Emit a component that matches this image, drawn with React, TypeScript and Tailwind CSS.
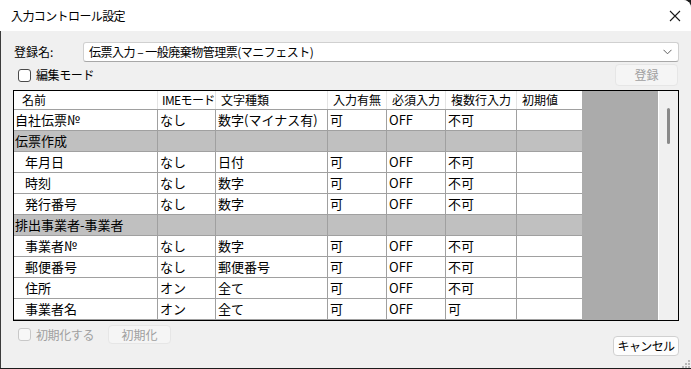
import React from "react";

type Row =
  | { group: string }
  | {
      name: string;
      sub?: boolean;
      ime: string;
      type: string;
      inp: string;
      req: string;
      multi: string;
      init: string;
    };

const rows: Row[] = [
  { name: "自社伝票№", ime: "なし", type: "数字(マイナス有)", inp: "可", req: "OFF", multi: "不可", init: "" },
  { group: "伝票作成" },
  { name: "年月日", sub: true, ime: "なし", type: "日付", inp: "可", req: "OFF", multi: "不可", init: "" },
  { name: "時刻", sub: true, ime: "なし", type: "数字", inp: "可", req: "OFF", multi: "不可", init: "" },
  { name: "発行番号", sub: true, ime: "なし", type: "数字", inp: "可", req: "OFF", multi: "不可", init: "" },
  { group: "排出事業者-事業者" },
  { name: "事業者№", sub: true, ime: "なし", type: "数字", inp: "可", req: "OFF", multi: "不可", init: "" },
  { name: "郵便番号", sub: true, ime: "なし", type: "郵便番号", inp: "可", req: "OFF", multi: "不可", init: "" },
  { name: "住所", sub: true, ime: "オン", type: "全て", inp: "可", req: "OFF", multi: "不可", init: "" },
  { name: "事業者名", sub: true, ime: "オン", type: "全て", inp: "可", req: "OFF", multi: "可", init: "" },
  { name: "", ime: "", type: "", inp: "", req: "", multi: "", init: "" },
];

const widths = ["w-[144px]", "w-[58px]", "w-[112px]", "w-[59px]", "w-[59px]", "w-[71px]", "w-[66px]"];
const headers = ["名前", "IMEモード", "文字種類", "入力有無", "必須入力", "複数行入力", "初期値"];

function Checkbox({ disabled }: { disabled?: boolean }) {
  return (
    <span
      className={
        disabled
          ? "inline-block w-[13px] h-[13px] rounded-[3px] border border-[#c8c8c8] bg-[#f7f7f7]"
          : "inline-block w-[13px] h-[13px] rounded-[3px] border border-[#4a4a4a] bg-white"
      }
    />
  );
}

export default function App() {
  return (
    <div className="w-[691px] h-[369px] bg-[#1c1c1c] overflow-hidden font-['Noto_Sans_CJK_JP',sans-serif] text-black">
      <div className="w-[691px] h-[368px] bg-[#f0f0f0] rounded-tr-[8px] overflow-hidden flex flex-col">
        {/* Title bar */}
        <div className="h-[31px] bg-white flex items-center justify-between pl-[11px] pr-[9px] shrink-0">
          <span className="text-[12px] tracking-[-0.6px]">入力コントロール設定</span>
          <svg width="12" height="12" viewBox="0 0 12 12" className="mr-[1px]">
            <path d="M1 1 L11 11 M11 1 L1 11" stroke="#1a1a1a" strokeWidth="1.1" fill="none" />
          </svg>
        </div>

        {/* Body */}
        <div className="flex-1 flex flex-col border-l border-[#3c3c3c] pl-[12px] pr-[12px] relative">
          {/* 登録名 row */}
          <div className="flex items-center h-[20px] mt-[11px]">
            <span className="w-[70px] pl-[1px] text-[12px]">登録名:</span>
            <div className="flex-1 h-[20px] bg-white border border-[#d0d0d0] border-b-[#a8a8a8] rounded-[3px] flex items-center justify-between pl-[5px] pr-[6px]">
              <span className="text-[12px] tracking-[-0.5px] whitespace-pre">伝票入力 – 一般廃棄物管理票(マニフェスト)</span>
              <svg width="9" height="6" viewBox="0 0 9 6">
                <path d="M0.5 0.8 L4.5 4.8 L8.5 0.8" stroke="#606060" strokeWidth="1" fill="none" />
              </svg>
            </div>
          </div>

          {/* 編集モード row */}
          <div className="flex items-center justify-between h-[22px] mt-[2px]">
            <div className="flex items-center gap-[5px] pl-[5px]">
              <Checkbox />
              <span className="text-[12px] tracking-[-0.4px]">編集モード</span>
            </div>
            <div className="w-[63px] h-[22px] mr-[1px] rounded-[4px] bg-[#f5f5f5] border border-[#e6e6e6] flex items-center justify-center text-[12px] text-[#a0a0a0]">
              登録
            </div>
          </div>

          {/* Table */}
          <div className="mt-[4px] h-[231px] border border-black flex overflow-hidden">
            <div className="w-[569px] flex flex-col bg-white overflow-hidden">
              <div className="flex h-[19px] shrink-0 border-b border-[#a0a0a0]">
                {headers.map((h, i) => (
                  <div
                    key={h}
                    className={`${widths[i]} shrink-0 border-r border-[#e4e4e4] flex items-center text-[12px] whitespace-nowrap overflow-hidden ${
                      i === 0 ? "pl-[8px]" : i === 1 ? "pl-[4px] tracking-[-0.6px]" : "pl-[5px]"
                    }`}
                  >
                    {h}
                  </div>
                ))}
              </div>
              {rows.map((r, idx) => {
                if ("group" in r) {
                  return (
                    <div key={idx} className="flex h-[21px] shrink-0 border-b border-[#a0a0a0] bg-[#c0c0c0]">
                      {widths.map((w, i) => (
                        <div
                          key={i}
                          className={`${w} shrink-0 border-r border-[#a0a0a0] flex items-center text-[13px] pl-[1px] whitespace-nowrap`}
                        >
                          {i === 0 ? r.group : ""}
                        </div>
                      ))}
                    </div>
                  );
                }
                const vals = [r.name, r.ime, r.type, r.inp, r.req, r.multi, r.init];
                return (
                  <div key={idx} className="flex h-[21px] shrink-0 border-b border-[#a0a0a0]">
                    {vals.map((v, i) => (
                      <div
                        key={i}
                        className={`${widths[i]} shrink-0 border-r border-[#a0a0a0] flex items-center text-[13px] whitespace-nowrap ${
                          i === 0 ? (r.sub ? "pl-[11px]" : "pl-[1px]") : "pl-[2px]"
                        }`}
                      >
                        {v}
                      </div>
                    ))}
                  </div>
                );
              })}
            </div>
            <div className="w-[76px] bg-[#ababab]" />
            <div className="w-[20px] bg-[#f0f0f0] border-l border-white relative">
              <div className="absolute left-[8px] top-[17px] w-[3px] h-[36px] rounded-full bg-[#8a8a8a]" />
            </div>
          </div>

          {/* Bottom row */}
          <div className="flex justify-between items-start">
            <div className="flex items-center mt-[4px] h-[19px]">
              <div className="flex items-center gap-[5px] pl-[5px]">
                <Checkbox disabled />
                <span className="text-[12px] text-[#a0a0a0] tracking-[-0.4px]">初期化する</span>
              </div>
              <div className="ml-[14px] w-[63px] h-[19px] rounded-[4px] bg-[#f5f5f5] border border-[#e6e6e6] flex items-center justify-center text-[12px] text-[#a0a0a0]">
                初期化
              </div>
            </div>
            <div className="mt-[15px] w-[66px] h-[20px] rounded-[4px] bg-[#fdfdfd] border border-[#d0d0d0] flex items-center justify-center text-[12px] tracking-[-0.6px]">
              キャンセル
            </div>
          </div>

          {/* resize grip */}
          <svg width="9" height="9" viewBox="0 0 9 9" className="absolute right-[1px] bottom-[0px]">
            <rect x="7" y="1" width="2" height="2" fill="#b8b8b8" />
            <rect x="4" y="4" width="2" height="2" fill="#b8b8b8" />
            <rect x="7" y="4" width="2" height="2" fill="#b8b8b8" />
            <rect x="1" y="7" width="2" height="2" fill="#b8b8b8" />
            <rect x="4" y="7" width="2" height="2" fill="#b8b8b8" />
            <rect x="7" y="7" width="2" height="2" fill="#b8b8b8" />
          </svg>
        </div>
      </div>
    </div>
  );
}
